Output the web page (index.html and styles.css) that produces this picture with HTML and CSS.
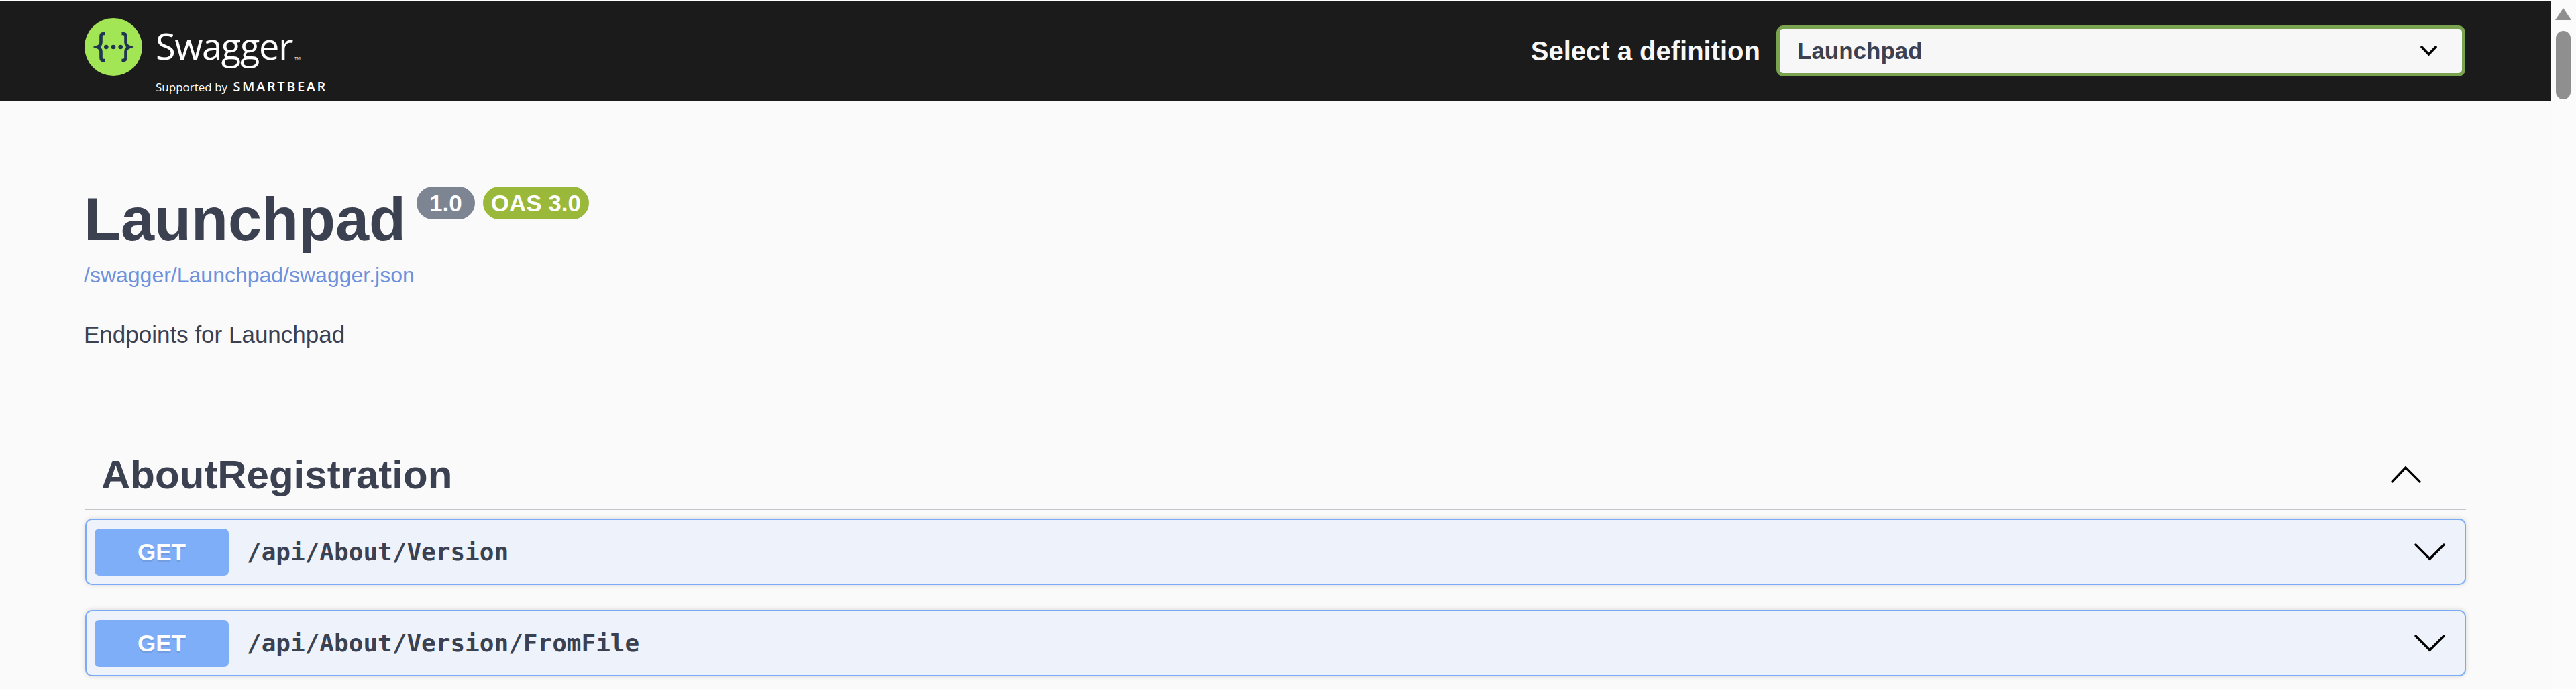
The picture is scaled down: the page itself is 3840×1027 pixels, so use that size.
FILE: index.html
```html
<!DOCTYPE html>
<html lang="en">
<head>
  <meta charset="UTF-8">
  <title>Swagger UI</title>
  <link rel="stylesheet" href="styles.css">
</head>
<body>
  <div class="page">
    <header class="topbar">
      <div class="logo">
        <svg class="logo-mark" width="86" height="86" viewBox="0 0 86 86">
          <circle cx="43" cy="43" r="43" fill="#a3e655"/>
          <g fill="none" stroke="#1f3550" stroke-width="4.6">
            <path d="M30.5 23H28.500Q24.500 23 24.500 27V36Q24.500 41 19 43Q24.500 45 24.500 50V59Q24.500 63 28.500 63H30.500"/>
            <path d="M55.500 23H57.500Q61.500 23 61.500 27V36Q61.500 41 67 43Q61.500 45 61.500 50V59Q61.500 63 57.500 63H55.500"/>
          </g>
          <g fill="#1f3550">
            <circle cx="32.300" cy="43" r="3.300"/>
            <circle cx="43" cy="43" r="3.300"/>
            <circle cx="53.700" cy="43" r="3.300"/>
          </g>
        </svg>
        <div class="logo-text">
          <div class="logo-name">Swagger<span class="logo-tm">TM</span></div>
          <div class="logo-sub">Supported by <span class="logo-bear">SMARTBEAR</span></div>
        </div>
      </div>
      <div class="definition">
        <span class="definition-label">Select a definition</span>
        <div class="select-box">
          <span>Launchpad</span>
          <svg width="25" height="16" viewBox="0 0 25 16">
            <path d="M2 2L12.500 13L23 2" fill="none" stroke="#000" stroke-width="3.600" stroke-linecap="round"/>
          </svg>
        </div>
      </div>
    </header>

    <main class="wrapper">
      <div class="info">
        <div class="title-row">
          <h2 class="title">Launchpad</h2>
          <span class="badge badge-version">1.0</span>
          <span class="badge badge-oas">OAS 3.0</span>
        </div>
        <a class="spec-link" href="#">/swagger/Launchpad/swagger.json</a>
        <p class="description">Endpoints for Launchpad</p>
      </div>

      <section class="tag-section">
        <div class="tag-head">
          <h3 class="tag-name">AboutRegistration</h3>
          <svg class="tag-arrow" width="50" height="50" viewBox="0 0 50 50">
            <path d="M5 36L25 15L46 36" fill="none" stroke="#000" stroke-width="3.400" stroke-linecap="round"/>
          </svg>
        </div>

        <div class="opblock">
          <span class="method">GET</span>
          <span class="path">/api/About/Version</span>
          <svg class="op-arrow" width="50" height="50" viewBox="0 0 50 50">
            <path d="M4 14L25 35L46 14" fill="none" stroke="#000" stroke-width="3.400" stroke-linecap="round"/>
          </svg>
        </div>
        <div class="opblock">
          <span class="method">GET</span>
          <span class="path">/api/About/Version/FromFile</span>
          <svg class="op-arrow" width="50" height="50" viewBox="0 0 50 50">
            <path d="M4 14L25 35L46 14" fill="none" stroke="#000" stroke-width="3.400" stroke-linecap="round"/>
          </svg>
        </div>
      </section>
    </main>
  </div>

  <aside class="scrollbar">
    <div class="scroll-arrow"></div>
    <div class="scroll-thumb"></div>
  </aside>
</body>
</html>
```

FILE: styles.css
```css
html, body {
  margin: 0;
  height: 100%;
  overflow: hidden;
}
body {
  display: flex;
  background: #fafafa;
  font-family: "Liberation Sans", Arial, sans-serif;
  color: #3b4151;
}
.page {
  flex: 1;
  min-width: 0;
}

/* top bar */
.topbar {
  display: flex;
  align-items: center;
  justify-content: space-between;
  height: 150px;
  padding: 0 127px 0 126px;
  background: #1b1b1b;
  border-top: 1px solid #fff;
}
.logo {
  display: flex;
  align-items: flex-start;
  gap: 20px;
  height: 86px;
  margin-top: -12px;
}
.logo-text {
  color: #fff;
  font-family: "Open Sans", sans-serif;
}
.logo-name {
  margin-top: 9px;
  font-size: 54px;
  line-height: 64px;
  letter-spacing: -1.2px;
}
.logo-tm {
  margin-left: 3px;
  font-size: 6px;
  letter-spacing: 0;
}
.logo-sub {
  margin-top: -2px;
  font-size: 17px;
  line-height: 24px;
  white-space: nowrap;
}
.logo-bear {
  margin-left: 4px;
  font-size: 20px;
  font-weight: 600;
  letter-spacing: 2.6px;
}
.definition {
  display: flex;
  align-items: center;
  gap: 24px;
}
.definition-label {
  color: #f7f7f7;
  font-size: 40px;
  font-weight: 700;
}
.select-box {
  box-sizing: border-box;
  display: flex;
  align-items: center;
  justify-content: space-between;
  width: 1027px;
  height: 76px;
  padding: 0 37px 0 26px;
  background: #f7f7f7;
  border: 5px solid #7aa34f;
  border-radius: 10px;
  font-size: 35px;
  font-weight: 700;
}

/* info block */
.wrapper {
  padding: 0 126px 0 125px;
}
.info {
  padding-top: 125px;
}
.title-row {
  display: flex;
  align-items: flex-start;
  gap: 12px;
}
.title {
  margin: 0 4px 0 0;
  font-size: 90px;
  font-weight: 700;
  line-height: 103px;
}
.badge {
  margin-top: 2px;
  padding: 0 12px;
  height: 49px;
  border-radius: 25px;
  color: #fff;
  font-size: 35px;
  font-weight: 700;
  line-height: 49px;
}
.badge-version {
  padding: 0 19px;
  background: #7d8492;
}
.badge-oas {
  background: #9ab93a;
}
.spec-link {
  display: block;
  margin-top: 13px;
  color: #6e91dc;
  font-size: 32px;
  line-height: 37px;
  text-decoration: none;
}
.description {
  margin: 48px 0 0;
  font-size: 35px;
  line-height: 44px;
}

/* operations */
.tag-section {
  margin-top: 135px;
}
.tag-head {
  display: flex;
  align-items: center;
  justify-content: space-between;
  height: 102px;
  margin-left: 2px;
  padding: 0 65px 0 24px;
  border-bottom: 2px solid #c4c5ca;
}
.tag-name {
  margin: 0;
  font-size: 60px;
  font-weight: 700;
}
.opblock {
  box-sizing: border-box;
  display: flex;
  align-items: center;
  height: 99px;
  margin: 13px 0 37px 2px;
  padding: 0 27px 0 12px;
  background: #eef3fb;
  border: 2.5px solid #7baaf7;
  border-radius: 10px;
  box-shadow: 0 0 7px rgba(0, 0, 0, 0.15);
}
.method {
  width: 200px;
  height: 70px;
  background: #7eaef8;
  border-radius: 7px;
  color: #fff;
  font-size: 35px;
  font-weight: 700;
  line-height: 70px;
  text-align: center;
  text-shadow: 0 2.5px 0 rgba(0, 0, 0, 0.1);
}
.path {
  flex: 1;
  padding-left: 27px;
  font-family: "DejaVu Sans Mono", monospace;
  font-size: 36px;
  font-weight: 700;
}

/* page scrollbar */
.scrollbar {
  flex: none;
  width: 38px;
  background: #fbfbfb;
}
.scroll-arrow {
  width: 0;
  height: 0;
  margin: 12px 0 0 7px;
  border-left: 12px solid transparent;
  border-right: 12px solid transparent;
  border-bottom: 18px solid #8f8f8f;
}
.scroll-thumb {
  width: 22px;
  height: 102px;
  margin: 16px 0 0 8px;
  background: #8f8f8f;
  border-radius: 11px;
}
```
